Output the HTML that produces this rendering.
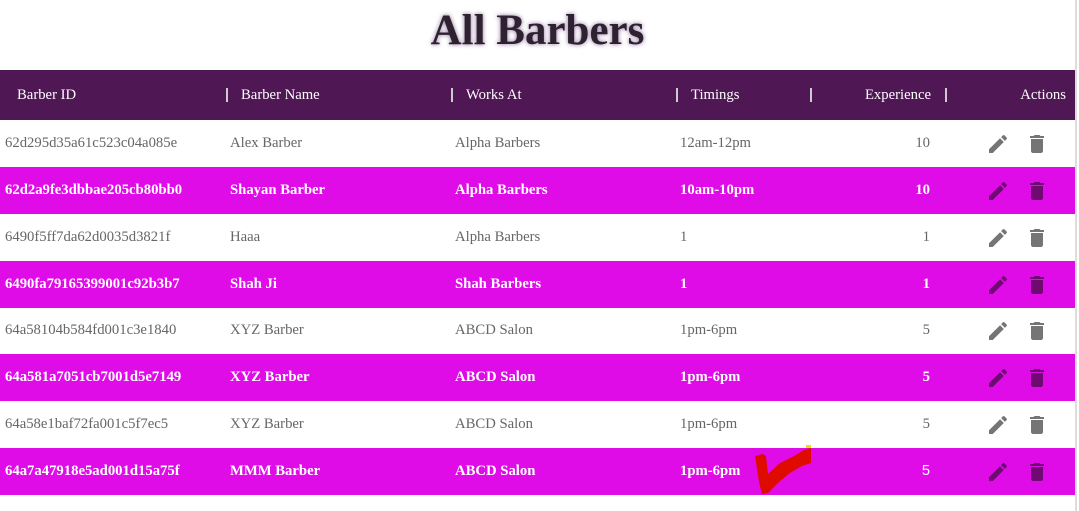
<!DOCTYPE html>
<html><head><meta charset="utf-8"><style>
body{margin:0;width:1079px;height:511px;background:#fff;overflow:hidden;position:relative;font-family:"Liberation Serif",serif;}
h1{position:absolute;top:7px;left:0;width:1075px;text-align:center;margin:0;font-size:43px;font-weight:bold;color:#2e2230;text-shadow:0 0 5px #8a6c9a;line-height:48px;}
.hd{position:absolute;top:70px;left:0;width:1075px;height:50px;background:#501755;color:#fff;font-size:14.7px;}
.hd span{position:absolute;top:17px;}
.sep{position:absolute;top:18px;width:2px;height:14px;background:#ccc;}
.row{position:absolute;left:0;width:1075px;height:47px;font-size:14.7px;color:#666;}
.row.m{background:#df0ce8;color:#fff;font-weight:bold;}
.row span{position:absolute;top:15px;}
.row .e{right:145px;}
.row svg{position:absolute;top:12px;}
.row svg path{fill:#757575;}
.row.m svg path{fill:#6e0a72;}
.sb{position:absolute;left:1075px;top:0;width:2px;height:511px;background:#ddd;}
</style></head><body>
<h1>All Barbers</h1>
<div class="hd">
<span style="left:17px">Barber ID</span>
<div class="sep" style="left:226px"></div><span style="left:241px">Barber Name</span>
<div class="sep" style="left:451px"></div><span style="left:466px">Works At</span>
<div class="sep" style="left:676px"></div><span style="left:691px">Timings</span>
<div class="sep" style="left:810px"></div><span style="right:144px">Experience</span>
<div class="sep" style="left:945px"></div><span style="right:9px">Actions</span>
</div>
<div class="row" style="top:120px"><span style="left:5px">62d295d35a61c523c04a085e</span><span style="left:230px">Alex Barber</span><span style="left:455px">Alpha Barbers</span><span style="left:680px">12am-12pm</span><span class="e">10</span><svg style="left:986px" width="24" height="24" viewBox="0 0 24 24"><path d="M3 17.25V21h3.75L17.81 9.94l-3.75-3.75L3 17.25zM20.71 7.04a1 1 0 000-1.41l-2.34-2.34a1 1 0 00-1.41 0l-1.83 1.83 3.75 3.75 1.83-1.83z"/></svg><svg style="left:1025px" width="24" height="24" viewBox="0 0 24 24"><path d="M6 19c0 1.1.9 2 2 2h8c1.1 0 2-.9 2-2V7H6v12zM19 4h-3.5l-1-1h-5l-1 1H5v2h14V4z"/></svg></div>
<div class="row m" style="top:167px"><span style="left:5px">62d2a9fe3dbbae205cb80bb0</span><span style="left:230px">Shayan Barber</span><span style="left:455px">Alpha Barbers</span><span style="left:680px">10am-10pm</span><span class="e">10</span><svg style="left:986px" width="24" height="24" viewBox="0 0 24 24"><path d="M3 17.25V21h3.75L17.81 9.94l-3.75-3.75L3 17.25zM20.71 7.04a1 1 0 000-1.41l-2.34-2.34a1 1 0 00-1.41 0l-1.83 1.83 3.75 3.75 1.83-1.83z"/></svg><svg style="left:1025px" width="24" height="24" viewBox="0 0 24 24"><path d="M6 19c0 1.1.9 2 2 2h8c1.1 0 2-.9 2-2V7H6v12zM19 4h-3.5l-1-1h-5l-1 1H5v2h14V4z"/></svg></div>
<div class="row" style="top:214px"><span style="left:5px">6490f5ff7da62d0035d3821f</span><span style="left:230px">Haaa</span><span style="left:455px">Alpha Barbers</span><span style="left:680px">1</span><span class="e">1</span><svg style="left:986px" width="24" height="24" viewBox="0 0 24 24"><path d="M3 17.25V21h3.75L17.81 9.94l-3.75-3.75L3 17.25zM20.71 7.04a1 1 0 000-1.41l-2.34-2.34a1 1 0 00-1.41 0l-1.83 1.83 3.75 3.75 1.83-1.83z"/></svg><svg style="left:1025px" width="24" height="24" viewBox="0 0 24 24"><path d="M6 19c0 1.1.9 2 2 2h8c1.1 0 2-.9 2-2V7H6v12zM19 4h-3.5l-1-1h-5l-1 1H5v2h14V4z"/></svg></div>
<div class="row m" style="top:261px"><span style="left:5px">6490fa79165399001c92b3b7</span><span style="left:230px">Shah Ji</span><span style="left:455px">Shah Barbers</span><span style="left:680px">1</span><span class="e">1</span><svg style="left:986px" width="24" height="24" viewBox="0 0 24 24"><path d="M3 17.25V21h3.75L17.81 9.94l-3.75-3.75L3 17.25zM20.71 7.04a1 1 0 000-1.41l-2.34-2.34a1 1 0 00-1.41 0l-1.83 1.83 3.75 3.75 1.83-1.83z"/></svg><svg style="left:1025px" width="24" height="24" viewBox="0 0 24 24"><path d="M6 19c0 1.1.9 2 2 2h8c1.1 0 2-.9 2-2V7H6v12zM19 4h-3.5l-1-1h-5l-1 1H5v2h14V4z"/></svg></div>
<div class="row" style="top:307px"><span style="left:5px">64a58104b584fd001c3e1840</span><span style="left:230px">XYZ Barber</span><span style="left:455px">ABCD Salon</span><span style="left:680px">1pm-6pm</span><span class="e">5</span><svg style="left:986px" width="24" height="24" viewBox="0 0 24 24"><path d="M3 17.25V21h3.75L17.81 9.94l-3.75-3.75L3 17.25zM20.71 7.04a1 1 0 000-1.41l-2.34-2.34a1 1 0 00-1.41 0l-1.83 1.83 3.75 3.75 1.83-1.83z"/></svg><svg style="left:1025px" width="24" height="24" viewBox="0 0 24 24"><path d="M6 19c0 1.1.9 2 2 2h8c1.1 0 2-.9 2-2V7H6v12zM19 4h-3.5l-1-1h-5l-1 1H5v2h14V4z"/></svg></div>
<div class="row m" style="top:354px"><span style="left:5px">64a581a7051cb7001d5e7149</span><span style="left:230px">XYZ Barber</span><span style="left:455px">ABCD Salon</span><span style="left:680px">1pm-6pm</span><span class="e">5</span><svg style="left:986px" width="24" height="24" viewBox="0 0 24 24"><path d="M3 17.25V21h3.75L17.81 9.94l-3.75-3.75L3 17.25zM20.71 7.04a1 1 0 000-1.41l-2.34-2.34a1 1 0 00-1.41 0l-1.83 1.83 3.75 3.75 1.83-1.83z"/></svg><svg style="left:1025px" width="24" height="24" viewBox="0 0 24 24"><path d="M6 19c0 1.1.9 2 2 2h8c1.1 0 2-.9 2-2V7H6v12zM19 4h-3.5l-1-1h-5l-1 1H5v2h14V4z"/></svg></div>
<div class="row" style="top:401px"><span style="left:5px">64a58e1baf72fa001c5f7ec5</span><span style="left:230px">XYZ Barber</span><span style="left:455px">ABCD Salon</span><span style="left:680px">1pm-6pm</span><span class="e">5</span><svg style="left:986px" width="24" height="24" viewBox="0 0 24 24"><path d="M3 17.25V21h3.75L17.81 9.94l-3.75-3.75L3 17.25zM20.71 7.04a1 1 0 000-1.41l-2.34-2.34a1 1 0 00-1.41 0l-1.83 1.83 3.75 3.75 1.83-1.83z"/></svg><svg style="left:1025px" width="24" height="24" viewBox="0 0 24 24"><path d="M6 19c0 1.1.9 2 2 2h8c1.1 0 2-.9 2-2V7H6v12zM19 4h-3.5l-1-1h-5l-1 1H5v2h14V4z"/></svg></div>
<div class="row m" style="top:448px"><span style="left:5px">64a7a47918e5ad001d15a75f</span><span style="left:230px">MMM Barber</span><span style="left:455px">ABCD Salon</span><span style="left:680px">1pm-6pm</span><span class="e" style="font-family:'Liberation Sans',sans-serif;font-weight:normal">5</span><svg style="left:986px" width="24" height="24" viewBox="0 0 24 24"><path d="M3 17.25V21h3.75L17.81 9.94l-3.75-3.75L3 17.25zM20.71 7.04a1 1 0 000-1.41l-2.34-2.34a1 1 0 00-1.41 0l-1.83 1.83 3.75 3.75 1.83-1.83z"/></svg><svg style="left:1025px" width="24" height="24" viewBox="0 0 24 24"><path d="M6 19c0 1.1.9 2 2 2h8c1.1 0 2-.9 2-2V7H6v12zM19 4h-3.5l-1-1h-5l-1 1H5v2h14V4z"/></svg></div>
<svg style="position:absolute;left:750px;top:444px" width="65" height="52" viewBox="0 0 65 52"><polygon points="5,12 13,10 16,12 18,30 30,19 44,12 54,6 61,4 61,19 52,22 40,29 29,38 18,49 12,50 9,38" fill="#e00b00"/><rect x="56" y="1" width="5" height="3" fill="#f0e000"/></svg>
<div class="sb"></div>
</body></html>
